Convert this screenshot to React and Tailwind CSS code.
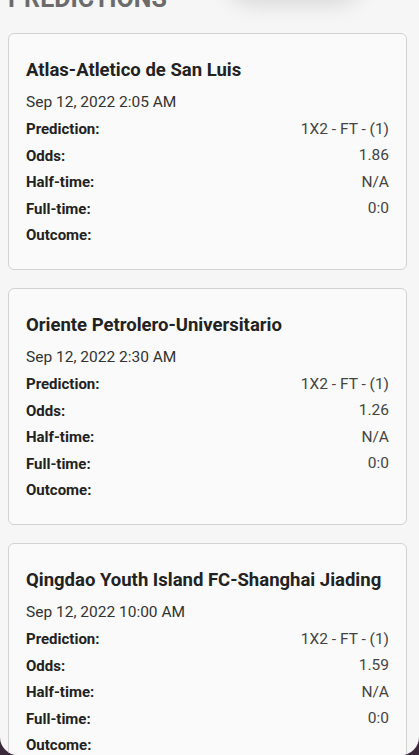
const matches = [
  {
    title: 'Atlas-Atletico de San Luis',
    date: 'Sep 12, 2022 2:05 AM',
    prediction: '1X2 - FT - (1)',
    odds: '1.86',
    half: 'N/A',
    full: '0:0',
  },
  {
    title: 'Oriente Petrolero-Universitario',
    date: 'Sep 12, 2022 2:30 AM',
    prediction: '1X2 - FT - (1)',
    odds: '1.26',
    half: 'N/A',
    full: '0:0',
  },
  {
    title: 'Qingdao Youth Island FC-Shanghai Jiading',
    date: 'Sep 12, 2022 10:00 AM',
    prediction: '1X2 - FT - (1)',
    odds: '1.59',
    half: 'N/A',
    full: '0:0',
  },
];

const Row = ({ label, value }) => (
  <div className="flex h-[26.6px] items-center justify-between">
    <span className="text-[15px] font-bold text-[#222]">{label}</span>
    <span className="text-[15.5px] text-[#444]">{value}</span>
  </div>
);

const MatchCard = ({ match }) => (
  <div className="rounded-md border border-[#d2d2d2] bg-[#fafafa] px-[17px] pt-[24px] pb-[20px]">
    <h3 className="text-[18.5px] font-bold leading-[24px] text-[#222]">{match.title}</h3>
    <p className="mt-[7px] text-[15.5px] leading-[26px] text-[#333]">{match.date}</p>
    <div className="mt-[1px]">
      <Row label="Prediction:" value={match.prediction} />
      <Row label="Odds:" value={match.odds} />
      <Row label="Half-time:" value={match.half} />
      <Row label="Full-time:" value={match.full} />
      <Row label="Outcome:" value="" />
    </div>
  </div>
);

export default function App() {
  return (
    <div className="h-[755px] overflow-hidden bg-[#3b2a3a]" style={{ fontFamily: 'Roboto, "Noto Sans", sans-serif' }}>
      <div className="relative h-full overflow-hidden rounded-b-[18px] bg-[#f6f6f6] pl-2 pr-3">
        {/* floating pill shadow above the fold */}
        <div className="absolute -top-[58px] left-[226px] h-[52px] w-[136px] rounded-full bg-[#f6f6f6] shadow-[0_10px_22px_rgba(0,0,0,0.13)]" />

        <h2 className="-mt-[13px] text-[25px] font-bold leading-[24px] text-[#6b6b6b]">PREDICTIONS</h2>

        <div className="mt-[22px] flex flex-col gap-[18px]">
          {matches.map((m) => (
            <MatchCard key={m.title} match={m} />
          ))}
        </div>
      </div>
    </div>
  );
}
